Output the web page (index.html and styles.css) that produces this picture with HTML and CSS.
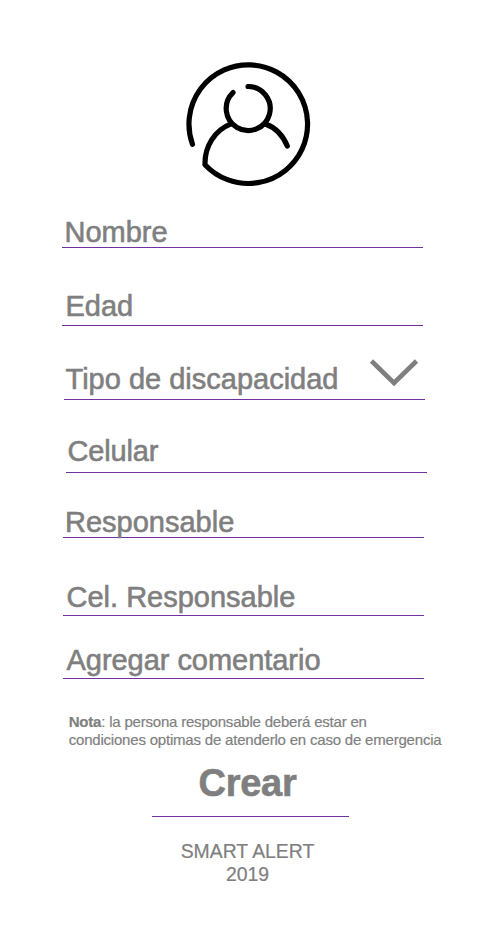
FILE: index.html
```html
<!DOCTYPE html>
<html lang="es">
<head>
<meta charset="utf-8">
<title>Smart Alert</title>
<link rel="stylesheet" href="styles.css">
</head>
<body>
<main class="screen">
  <svg class="avatar" viewBox="0 0 140 140" aria-hidden="true">
    <path d="M14.5 90.3A59.3 59.3 0 1 1 27 110.7C26.5 92 37 76 53 69.8"/>
    <path d="M55 38.6A22 22 0 1 0 70 32.5"/>
    <path d="M88 70.2C97 73.5 105 81.500 109.300 92"/>
  </svg>
  <form class="form">
    <div class="field nombre"><label>Nombre</label></div>
    <div class="field edad"><label>Edad</label></div>
    <div class="field tipo"><label>Tipo de discapacidad</label>
      <svg class="chevron" viewBox="0 0 50 32" aria-hidden="true"><path d="M2.500 5L25 27L47.500 5"/></svg>
    </div>
    <div class="field celular"><label>Celular</label></div>
    <div class="field responsable"><label>Responsable</label></div>
    <div class="field cel-responsable"><label>Cel. Responsable</label></div>
    <div class="field comentario"><label>Agregar comentario</label></div>
  </form>
  <p class="note"><b>Nota</b>: la persona responsable deberá estar en<br>condiciones optimas de atenderlo en caso de emergencia</p>
  <div class="create">Crear</div>
  <footer class="footer"><span class="brand">SMART ALERT</span><br>2019</footer>
</main>
</body>
</html>
```
FILE: styles.css
```css
* { box-sizing: border-box; }
body {
  margin: 0;
  background: #fff;
  color: #7f7f7f;
  font-family: "Liberation Sans", Arial, sans-serif;
}
.screen {
  display: flex;
  flex-direction: column;
  height: 946px;
  padding-top: 54px;
}
.avatar {
  width: 140px;
  height: 140px;
  margin-left: 178px;
  fill: none;
  stroke: #000;
  stroke-width: 5.2;
  stroke-linecap: round;
  stroke-linejoin: round;
}
.field {
  display: flex;
  align-items: flex-end;
  justify-content: space-between;
  width: 361px;
  border-bottom: 1px solid #7030a0;
  font-size: 29px;
  line-height: 28px;
  white-space: nowrap;
  -webkit-text-stroke: 0.6px #7f7f7f;
}
.nombre { height: 54px; margin-left: 62px; padding: 0 0 1px 2.5px; }
.edad { height: 78px; margin-left: 62px; padding: 0 0 5px 3.5px; }
.tipo { height: 74px; margin-left: 64px; padding: 0 6px 6px 1.5px; }
.celular { height: 73px; margin-left: 66px; padding: 0 0 7px 1.5px; letter-spacing: -0.15px; }
.responsable { height: 65px; margin-left: 63px; padding: 0 0 1px 2px; }
.cel-responsable { height: 78px; margin-left: 63px; padding: 0 0 4px 3.5px; }
.comentario { height: 63px; margin-left: 63px; padding: 0 0 4px 3.5px; letter-spacing: -0.04px; }
.chevron {
  width: 50px;
  height: 32px;
  margin-bottom: 5px;
  fill: none;
  stroke: #7f7f7f;
  stroke-width: 4.6;
}
.note {
  margin: 34px 0 0 68.7px;
  font-size: 15px;
  line-height: 18px;
  letter-spacing: -0.2px;
  white-space: nowrap;
  -webkit-text-stroke: 0.2px #7f7f7f;
}
.create {
  width: 197px;
  height: 68px;
  margin-left: 152px;
  padding: 13px 6px 0 0;
  border-bottom: 1px solid #7030a0;
  font-size: 38px;
  font-weight: bold;
  line-height: 42px;
  letter-spacing: -0.3px;
  text-align: center;
  -webkit-text-stroke: 0.6px #7f7f7f;
}
.footer {
  width: 495px;
  margin-top: 23px;
  font-size: 19.4px;
  line-height: 23px;
  text-align: center;
  -webkit-text-stroke: 0.2px #7f7f7f;
}
```
